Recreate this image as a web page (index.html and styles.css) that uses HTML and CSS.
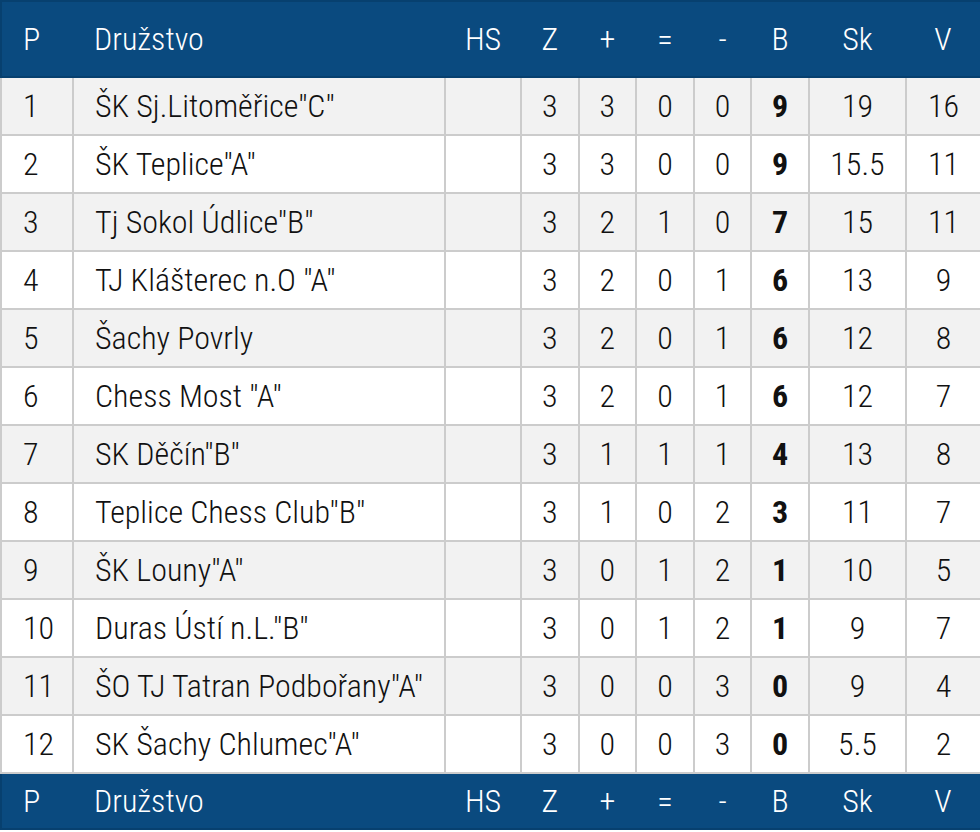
FILE: index.html
```html
<!DOCTYPE html>
<html lang="cs">
<head>
<meta charset="utf-8">
<title>Tabulka</title>
<link rel="stylesheet" href="styles.css">
</head>
<body>
<table class="standings">
  <colgroup>
    <col class="c-p"><col class="c-team"><col class="c-hs"><col class="c-n"><col class="c-n"><col class="c-n"><col class="c-n"><col class="c-n"><col class="c-sk"><col class="c-v">
  </colgroup>
  <thead>
    <tr><th class="l">P</th><th class="l">Družstvo</th><th>HS</th><th>Z</th><th>+</th><th>=</th><th>-</th><th>B</th><th>Sk</th><th>V</th></tr>
  </thead>
  <tbody>
    <tr><td class="l">1</td><td class="l">ŠK Sj.Litoměřice"C"</td><td></td><td>3</td><td>3</td><td>0</td><td>0</td><td class="b">9</td><td>19</td><td>16</td></tr>
    <tr><td class="l">2</td><td class="l">ŠK Teplice"A"</td><td></td><td>3</td><td>3</td><td>0</td><td>0</td><td class="b">9</td><td>15.5</td><td>11</td></tr>
    <tr><td class="l">3</td><td class="l">Tj Sokol Údlice"B"</td><td></td><td>3</td><td>2</td><td>1</td><td>0</td><td class="b">7</td><td>15</td><td>11</td></tr>
    <tr><td class="l">4</td><td class="l">TJ Klášterec n.O "A"</td><td></td><td>3</td><td>2</td><td>0</td><td>1</td><td class="b">6</td><td>13</td><td>9</td></tr>
    <tr><td class="l">5</td><td class="l">Šachy Povrly</td><td></td><td>3</td><td>2</td><td>0</td><td>1</td><td class="b">6</td><td>12</td><td>8</td></tr>
    <tr><td class="l">6</td><td class="l">Chess Most "A"</td><td></td><td>3</td><td>2</td><td>0</td><td>1</td><td class="b">6</td><td>12</td><td>7</td></tr>
    <tr><td class="l">7</td><td class="l">SK Děčín"B"</td><td></td><td>3</td><td>1</td><td>1</td><td>1</td><td class="b">4</td><td>13</td><td>8</td></tr>
    <tr><td class="l">8</td><td class="l">Teplice Chess Club"B"</td><td></td><td>3</td><td>1</td><td>0</td><td>2</td><td class="b">3</td><td>11</td><td>7</td></tr>
    <tr><td class="l">9</td><td class="l">ŠK Louny"A"</td><td></td><td>3</td><td>0</td><td>1</td><td>2</td><td class="b">1</td><td>10</td><td>5</td></tr>
    <tr><td class="l">10</td><td class="l">Duras Ústí n.L."B"</td><td></td><td>3</td><td>0</td><td>1</td><td>2</td><td class="b">1</td><td>9</td><td>7</td></tr>
    <tr><td class="l">11</td><td class="l">ŠO TJ Tatran Podbořany"A"</td><td></td><td>3</td><td>0</td><td>0</td><td>3</td><td class="b">0</td><td>9</td><td>4</td></tr>
    <tr><td class="l">12</td><td class="l">SK Šachy Chlumec"A"</td><td></td><td>3</td><td>0</td><td>0</td><td>3</td><td class="b">0</td><td>5.5</td><td>2</td></tr>
  </tbody>
  <tfoot>
    <tr><th class="l">P</th><th class="l">Družstvo</th><th>HS</th><th>Z</th><th>+</th><th>=</th><th>-</th><th>B</th><th>Sk</th><th>V</th></tr>
  </tfoot>
</table>
</body>
</html>
```
FILE: styles.css
```css
html, body {
  margin: 0;
  padding: 0;
  background: #ffffff;
}
.standings {
  width: 980px;
  border-collapse: collapse;
  table-layout: fixed;
  font-family: "Roboto", "Liberation Sans", sans-serif;
  font-stretch: 75%;
  font-weight: 300;
  font-size: 32px;
  color: #111111;
}
.c-p { width: 72px; }
.c-team { width: 372px; }
.c-hs { width: 76px; }
.c-n { width: 57.6px; }
.c-sk { width: 97px; }
.c-v { width: 75px; }
.standings th {
  background: #0a4a7f;
  color: #ffffff;
  font-weight: 300;
  text-align: center;
  border-top: 2px solid #07406f;
  border-bottom: 2px solid #07406f;
  padding: 0;
}
.standings th:first-child { border-left: 2px solid #07406f; }
.standings th:last-child { border-right: 2px solid #07406f; }
.standings thead th { height: 74px; }
.standings tfoot th { height: 54px; }
.standings td {
  border: 2px solid #cccccc;
  height: 56px;
  padding: 0;
  text-align: center;
}
.standings tbody tr:nth-child(odd) td { background: #f2f2f2; }
.standings tbody tr:nth-child(even) td { background: #ffffff; }
.standings .l {
  text-align: left;
  padding-left: 21px;
}
.standings td.b { font-weight: 700; }
```
